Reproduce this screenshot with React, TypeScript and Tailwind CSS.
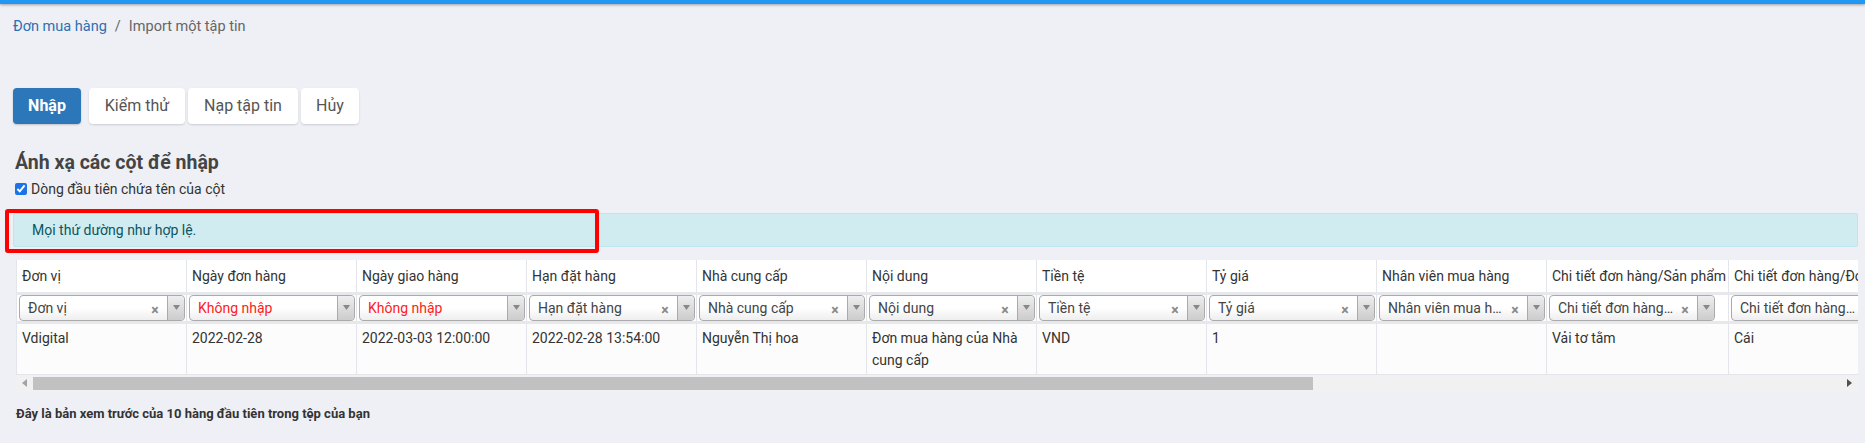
import React from "react";

type Col = { title: string; w: number; sel: string; red?: boolean; noClear?: boolean; val: string };

const cols: Col[] = [
  { title: "Đơn vị", w: 170, sel: "Đơn vị", val: "Vdigital" },
  { title: "Ngày đơn hàng", w: 170, sel: "Không nhập", red: true, noClear: true, val: "2022-02-28" },
  { title: "Ngày giao hàng", w: 170, sel: "Không nhập", red: true, noClear: true, val: "2022-03-03 12:00:00" },
  { title: "Hạn đặt hàng", w: 170, sel: "Hạn đặt hàng", val: "2022-02-28 13:54:00" },
  { title: "Nhà cung cấp", w: 170, sel: "Nhà cung cấp", val: "Nguyễn Thị hoa" },
  { title: "Nội dung", w: 170, sel: "Nội dung", val: "Đơn mua hàng của Nhà cung cấp" },
  { title: "Tiền tệ", w: 170, sel: "Tiền tệ", val: "VND" },
  { title: "Tỷ giá", w: 170, sel: "Tỷ giá", val: "1" },
  { title: "Nhân viên mua hàng", w: 170, sel: "Nhân viên mua hàng", val: "" },
  { title: "Chi tiết đơn hàng/Sản phẩm", w: 182, sel: "Chi tiết đơn hàng/Sản phẩm", val: "Vải tơ tằm" },
  { title: "Chi tiết đơn hàng/Đơn vị tính", w: 190, sel: "Chi tiết đơn hàng/Đơn vị tính", val: "Cái" },
];

function Select({ c }: { c: Col }) {
  return (
    <div className="flex h-[26px] w-[166px] items-stretch rounded-[4px] border border-[#aaaaaa] bg-gradient-to-b from-white from-50% to-[#eeeeee] text-[14px]">
      <span
        className={
          "min-w-0 flex-1 truncate pl-[8px] pr-[4px] leading-[24px] " +
          (c.red ? "text-[#ff2020]" : "text-[#444444]")
        }
      >
        {c.sel}
      </span>
      {!c.noClear && (
        <span className="flex w-[14px] items-center justify-center pt-[4px] text-[14px] font-bold leading-none text-[#888888]">
          ×
        </span>
      )}
      <span className="ml-[5px] flex w-[17px] items-center justify-center rounded-r-[4px] border-l border-[#aaaaaa] bg-gradient-to-b from-[#eeeeee] to-[#cccccc]">
        <svg width="7" height="5" viewBox="0 0 7 5">
          <path d="M0 0 L7 0 L3.5 5 Z" fill="#888888" />
        </svg>
      </span>
    </div>
  );
}

export default function App() {
  return (
    <div
      className="relative min-h-[443px] w-[1865px] overflow-hidden bg-[#eff0f5] text-[#333333]"
      style={{ fontFamily: "Roboto, 'Noto Sans', sans-serif" }}
    >
      <div className="h-[4px] bg-[#2196f3] shadow-[0_1px_3px_rgba(0,0,0,0.35)]" />

      <div className="pl-[13px] pr-[7px]">
        <div className="mt-[13px] flex items-center text-[14.5px] leading-[20px]">
          <span className="text-[#2c6fb3]">Đơn mua hàng</span>
          <span className="mx-[8px] text-[#666666]">/</span>
          <span className="text-[#666666]">Import một tập tin</span>
        </div>

        <div className="mt-[51px] flex items-center">
          <button className="h-[36px] w-[68px] rounded-[4px] bg-[#2b77b9] text-[16px] font-bold text-white shadow-[0_1px_2px_rgba(0,0,0,0.2)]">
            Nhập
          </button>
          <button className="ml-[8px] h-[36px] w-[96px] rounded-[4px] bg-white text-[16px] text-[#555555] shadow-[0_1px_2px_rgba(0,0,0,0.15)]">
            Kiểm thử
          </button>
          <button className="ml-[3px] h-[36px] w-[110px] rounded-[4px] bg-white text-[16px] text-[#555555] shadow-[0_1px_2px_rgba(0,0,0,0.15)]">
            Nạp tập tin
          </button>
          <button className="ml-[3px] h-[36px] w-[58px] rounded-[4px] bg-white text-[16px] text-[#555555] shadow-[0_1px_2px_rgba(0,0,0,0.15)]">
            Hủy
          </button>
        </div>

        <div className="mt-[27px] pl-[2px] text-[19.5px] font-bold leading-[24px] text-[#444444]">
          Ánh xạ các cột để nhập
        </div>
        <label className="mt-[6px] flex items-center pl-[2px] text-[14px] leading-[16px] text-[#333333]">
          <input type="checkbox" defaultChecked className="m-0 mr-[4px] h-[12px] w-[12px] accent-[#1a73e8]" />
          Dòng đầu tiên chứa tên của cột
        </label>

        <div className="mt-[16px] h-[34px] rounded-[2px] border border-[#bee5eb] bg-[#d1ecf1] pl-[18px] text-[14px] leading-[32px] text-[#0c5460]">
          Mọi thứ dường như hợp lệ.
        </div>

        <div className="ml-[3px] mt-[13px] overflow-hidden">
          <table className="table-fixed border-collapse text-[14px]" style={{ width: cols.reduce((a, c) => a + c.w, 0) }}>
            <colgroup>
              {cols.map((c, i) => (
                <col key={i} style={{ width: c.w }} />
              ))}
            </colgroup>
            <tbody>
              <tr className="h-[33px] bg-white">
                {cols.map((c, i) => (
                  <td key={i} className="whitespace-nowrap border-x border-[#e3e5ea] px-[5px] align-middle leading-[20px] text-[#333333]">
                    {c.title}
                  </td>
                ))}
              </tr>
              <tr className="bg-white">
                {cols.map((c, i) => (
                  <td key={i} className="border-x border-y-[3px] border-x-[#e3e5ea] border-y-[#e6e8ec] px-[2px] py-0 align-middle">
                    <Select c={c} />
                  </td>
                ))}
              </tr>
              <tr className="h-[52px] bg-[#fcfcfc]">
                {cols.map((c, i) => (
                  <td key={i} className="border border-[#e3e5ea] px-[5px] pt-[3px] align-top leading-[22px] text-[#333333]">
                    {c.val}
                  </td>
                ))}
              </tr>
            </tbody>
          </table>
          <div className="flex h-[17px] items-center bg-[#f1f1f1]">
            <div className="flex w-[17px] items-center justify-center">
              <svg width="5" height="8" viewBox="0 0 5 8">
                <path d="M5 0 L5 8 L0 4 Z" fill="#a3a3a3" />
              </svg>
            </div>
            <div className="h-[13px] w-[1280px] bg-[#c1c1c1]" />
            <div className="flex-1" />
            <div className="flex w-[17px] items-center justify-center">
              <svg width="5" height="8" viewBox="0 0 5 8">
                <path d="M0 0 L0 8 L5 4 Z" fill="#505050" />
              </svg>
            </div>
          </div>
        </div>

        <div className="ml-[3px] mt-[14px] text-[13px] font-bold leading-[16px] text-[#333333]">
          Đây là bản xem trước của 10 hàng đầu tiên trong tệp của bạn
        </div>
      </div>

      <div className="pointer-events-none absolute left-[5px] top-[209px] h-[44px] w-[594px] rounded-[3px] border-[4px] border-[#ff0000]" />
    </div>
  );
}
